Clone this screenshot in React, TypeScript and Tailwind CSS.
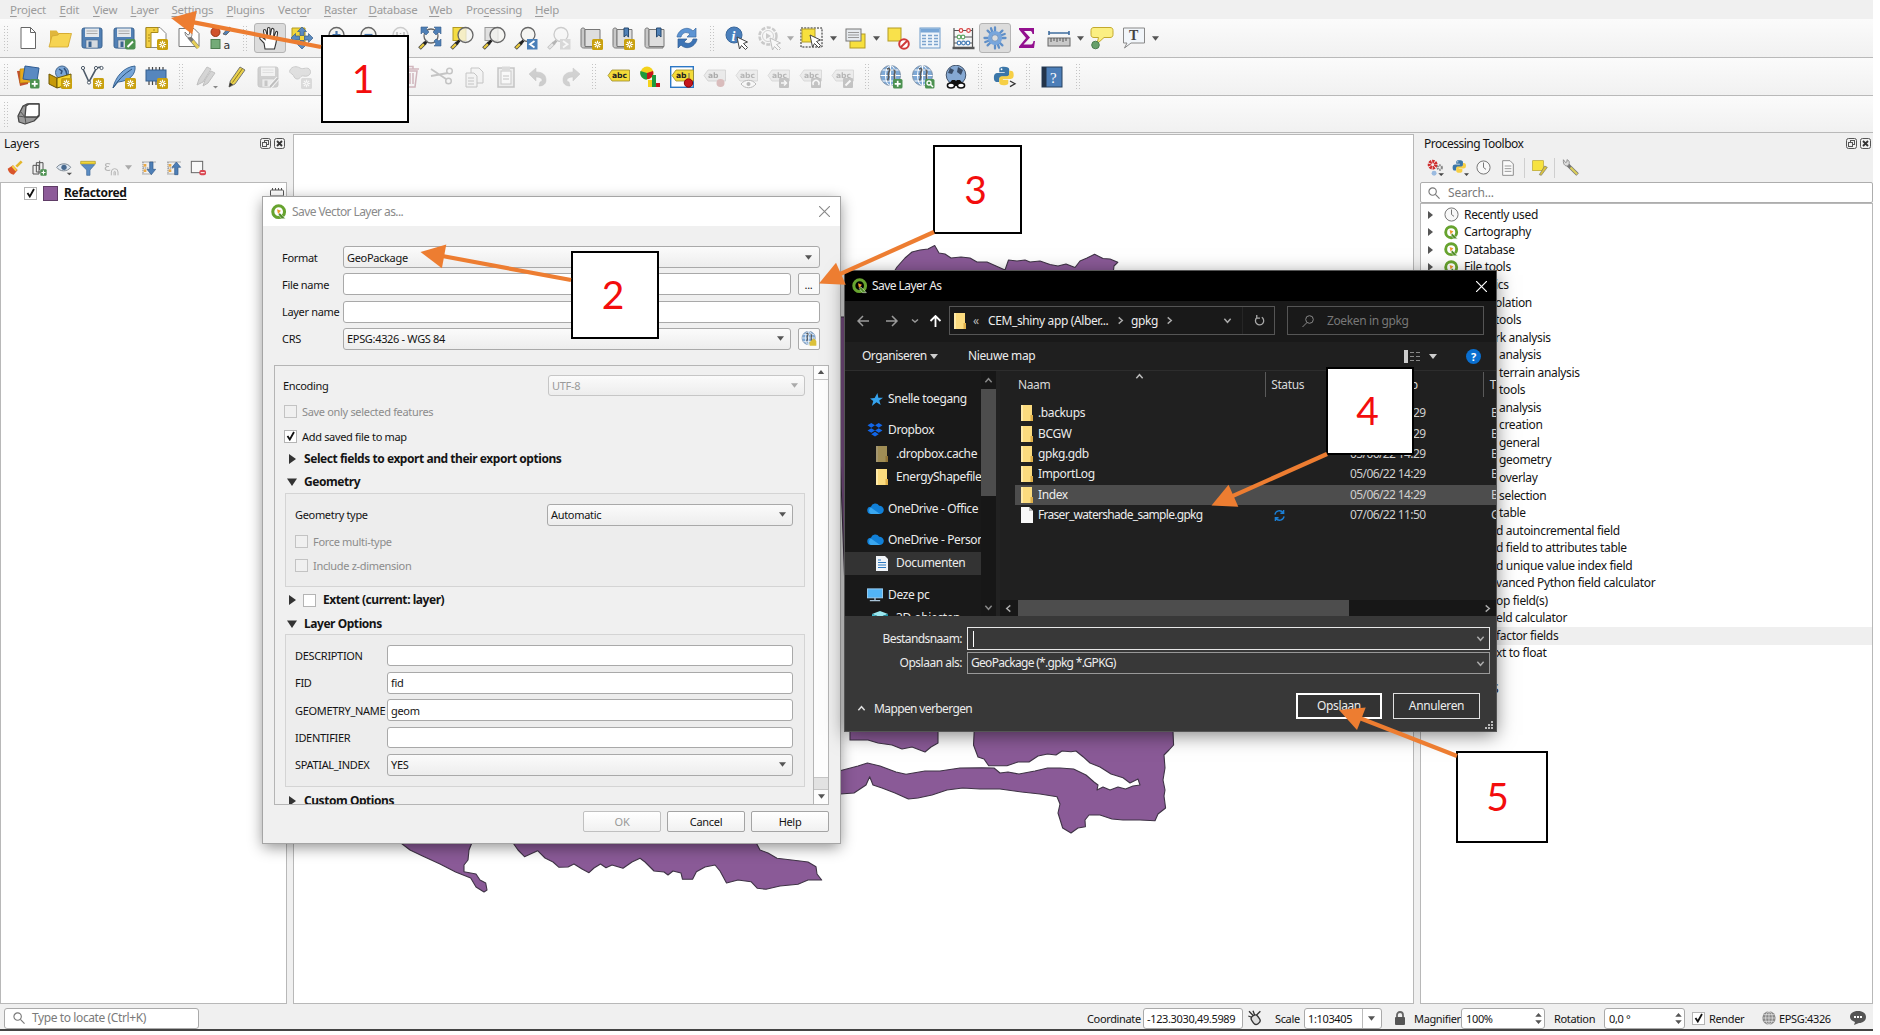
import React from "react";

type IconProps = { children: React.ReactNode; faded?: boolean; size?: string };

function Ic({ children, faded, size = "size-6" }: IconProps) {
  return (
    <svg viewBox="0 0 24 24" fill="none" className={`${size} shrink-0 ${faded ? "opacity-30 grayscale" : ""}`}>
      {children}
    </svg>
  );
}

const Star = ({ x = 13, y = 13 }: { x?: number; y?: number }) => (
  <g transform={`translate(${x} ${y})`}>
    <rect width="11" height="11" rx="1.5" fill="#c9a10f" />
    <path d="M5.5 1.8v7.4M1.8 5.5h7.4M2.9 2.9l5.2 5.2M8.1 2.9L2.9 8.1" stroke="#fff" strokeWidth="1.2" />
    <circle cx="5.5" cy="5.5" r="1" fill="#c9a10f" />
  </g>
);

const Plus = () => (
  <g>
    <rect x="14" y="14" width="9.5" height="9.5" rx="1.5" fill="#4c9150" />
    <path d="M18.7 15.8v6M15.7 18.8h6" stroke="#fff" strokeWidth="1.7" />
  </g>
);

const Lens = ({ cx = 14.5, cy = 9, r = 7.5, stick = "#e8c93c" }: { cx?: number; cy?: number; r?: number; stick?: string }) => (
  <g>
    <path d="M1.5 22.5l6-6" stroke="#444" strokeWidth="3.8" />
    <path d="M2 22l4-4" stroke={stick} strokeWidth="2.3" />
    <path d="M6 18l3.5-3.5" stroke="#222" strokeWidth="2.6" />
    <circle cx={cx} cy={cy} r={r} fill="#f4f4f0" fillOpacity=".75" stroke="#666" strokeWidth="1.3" />
  </g>
);

const Disk = () => (
  <g>
    <rect x="2" y="2" width="20" height="20" rx="2" fill="#5180b5" stroke="#3c6491" />
    <rect x="5" y="2.5" width="14" height="8.5" fill="#e4e8ec" />
    <path d="M6.5 5h11M6.5 7.5h11" stroke="#aaa" />
    <rect x="6" y="14" width="12" height="8" fill="#d5dae0" stroke="#46698f" strokeWidth=".6" />
    <rect x="8.5" y="15.5" width="3" height="5.5" fill="#3c6491" />
  </g>
);

const Pencil = () => (
  <g>
    <path d="M5 22l1.3-6L16 2l5 3-10 14z" fill="#e9d04b" stroke="#777" />
    <path d="M8.5 17.5L18.5 3.5" stroke="#8a7820" strokeWidth="1" />
    <path d="M5 22l1-4.5 3 2z" fill="#333" />
  </g>
);

const Tag = ({ text = "abc" }: { text?: string }) => (
  <g>
    <path d="M2 10.5L6 5h17.5v11H6z" fill="#f3db39" stroke="#9c8a28" strokeWidth=".8" />
    <text x="6" y="13" fontSize="7.6" fontWeight="bold" fill="#222" fontFamily="DejaVu Sans">{text}</text>
  </g>
);

const Globe = () => (
  <g>
    <circle cx="11.5" cy="10.5" r="10" fill="#7fa9d6" stroke="#7b90a8" />
    <path d="M1.5 10.5h20M11.5.5v20M3.5 5h16M3.5 16h16" stroke="#fff" strokeWidth="1.1" />
    <ellipse cx="11.5" cy="10.5" rx="5" ry="10" stroke="#fff" strokeWidth="1" />
    <path d="M8 4c2-1 3-.5 2.500 1.500s-2 3-1 5-.5 4-1 5M14.500 5c2 0 1.500 3 1 4s.5 4 0 6" stroke="#5a5a5a" strokeWidth="1.700" />
  </g>
);

const Cursor = ({ x = 12, y = 10 }: { x?: number; y?: number }) => (
  <path transform={`translate(${x} ${y})`} d="M0 0l10.5 5-4 1.5 4 4-2 2-4-4L2.5 12z" fill="#fff" stroke="#444" strokeWidth="1" />
);

const Book = () => (
  <g>
    <path d="M2 3.5c0-2 4-2 4 0v16H20v2.5H4.5C3 22 2 21 2 19.500z" fill="#c8c8c8" stroke="#777" />
    <path d="M6 3.500H21v17H6z" fill="#dedede" stroke="#777" />
  </g>
);

const Arrow45 = "M0 -11l4.500 4.500h-2.500v4h-4v-4h-2.500z";

const Python = () => (
  <g>
    <path d="M12 2c-4 0-5 1-5 3v3h6v1H5c-2 0-4 1-4 5s1.500 5 3.500 5H7v-3c0-2 1-3 3-3h5c2 0 3-1 3-3V5c0-2-2-3-6-3z" fill="#3b76a8" />
    <path d="M12 22.500c4 0 5-1 5-3v-3h-6v-1h8c2 0 4-1 4-4.500s-1.500-4.500-3.500-4.500H18v3c0 2-1 3-3 3h-5c-2 0-3 1-3 3v4c0 2 1.500 3 5 3z" fill="#f6cf45" />
    <circle cx="9.500" cy="4.700" r="1" fill="#fff" />
  </g>
);

function QLogo({ size = "size-4" }: { size?: string }) {
  return (
    <Ic size={size}>
      <circle cx="11.500" cy="11.500" r="8.800" stroke="#67a32f" strokeWidth="4.600" />
      <path d="M13 13l8.500 9h-5.500l-5-6z" fill="#4f8c25" stroke="#f0f0f0" strokeWidth=".8" />
      <path d="M9 8l6 2-4.500 5z" fill="#ee9a2c" />
    </Ic>
  );
}

function Grip({ w = "w-[17px]" }: { w?: string }) {
  return (
    <div className={`${w} flex shrink-0 justify-center`}>
      <div className="h-[27px] w-[6px] bg-[radial-gradient(#c4c4c4_0.9px,transparent_1px)] bg-[size:3px_3px]" />
    </div>
  );
}

function Caret({ w = "w-3", dim }: { w?: string; dim?: boolean }) {
  return (
    <div className={`${w} flex shrink-0 justify-center`}>
      <svg viewBox="0 0 8 5" className="h-[5px] w-[7px]"><path d="M0 0h8L4 5z" fill={dim ? "#aaa" : "#555"} /></svg>
    </div>
  );
}

function Cell({ children, active }: { children: React.ReactNode; active?: boolean }) {
  return (
    <div className={`flex h-[30px] w-[32.1px] shrink-0 items-center justify-center ${active ? "rounded-[3px] border border-[#b4b4b4] bg-[#dcdcdc]" : ""}`}>
      {children}
    </div>
  );
}

const menus: [string, string, string, string][] = [
  ["", "P", "roject", "w-[49.500px]"], ["", "E", "dit", "w-[33.500px]"], ["", "V", "iew", "w-[37.500px]"], ["", "L", "ayer", "w-[41px]"],
  ["", "S", "ettings", "w-[55px]"], ["", "P", "lugins", "w-[51.500px]"], ["Vect", "o", "r", "w-[46px]"], ["", "R", "aster", "w-[44.500px]"],
  ["", "D", "atabase", "w-[60.500px]"], ["", "W", "eb", "w-[37px]"], ["Pro", "c", "essing", "w-[69px]"], ["", "H", "elp", "w-[40px]"],
];

function MenuBar() {
  return (
    <div className="flex h-[19px] items-center bg-[#f0f0f0] pl-[10px] text-[11.500px] tracking-[-0.25px] text-[#9b9b9b]">
      {menus.map(([a, b, c, w], i) => (
        <span key={i} className={`${w} shrink-0 whitespace-nowrap`}>{a}<span className="underline underline-offset-2">{b}</span>{c}</span>
      ))}
    </div>
  );
}

function ToolbarOne() {
  return (
    <div className="flex h-[39px] items-center border-b border-[#b9b9b9] bg-linear-to-b from-[#fbfbfb] to-[#f1f1f1]">
      <Grip w="w-[12px]" />
      <Cell><Ic><path d="M5 1.500h9.500l5 5v16H5z" fill="#fff" stroke="#666" /><path d="M14.500 1.500v5h5" stroke="#666" /></Ic></Cell>
      <Cell><Ic><path d="M2 20V4.500h6.500l2 2.500H21v13z" fill="#e0b63c" /><path d="M1 21L4 10l6-1 1-1.500h12.500L20 21z" fill="#f6d452" stroke="#d1a62f" strokeWidth=".8" /></Ic></Cell>
      <Cell><Ic><Disk /></Ic></Cell>
      <Cell><Ic><Disk /><rect x="13" y="13" width="10.500" height="10.500" rx="2" fill="#4c9150" /><path d="M15.500 21l5.500-5.500" stroke="#fff" strokeWidth="2" /></Ic></Cell>
      <Cell><Ic><path d="M2 1.500h14l6 6v14H2z" fill="#fff" stroke="#888" /><path d="M2 1.500h12v5H7v15H2z" fill="#f2cf43" stroke="#a88a1a" /><path d="M4 9h2M4 12h2M4 15h2M10 3v2" stroke="#a88a1a" /><Star /></Ic></Cell>
      <Cell><Ic><path d="M2 2.500h15l5 5v13H2z" fill="#fff" stroke="#777" /><path d="M12 11l9 10.500" stroke="#777" strokeWidth="4" /><path d="M15.500 15l6 7" stroke="#e6cf58" strokeWidth="2.800" /><path d="M8 6l3 3 1.500-1V5c3 1 3 4 1.500 6.500-3 1-6-1-6-5.500z" fill="#eee" stroke="#666" strokeWidth=".8" /></Ic></Cell>
      <Cell><Ic><circle cx="6.500" cy="6" r="4.500" fill="#d0522a" stroke="#963310" /><rect x="2" y="13.500" width="9" height="9" fill="#74ab78" stroke="#4c7d4f" /><path d="M14 8l6-7 3 2-6 6z" fill="#5180b5" stroke="#555" strokeWidth=".8" /><text x="14.500" y="22.500" fontSize="11" fill="#333" fontFamily="DejaVu Sans">a</text></Ic></Cell>
      <Grip />
      <Cell active><Ic><path d="M7 23l-1-6-4-4c-1-2 1-3 2.500-1.500L7 13.500 5.500 5c0-2 2-2 2.500 0l1.500 6V3c0-2 2.500-2 2.500 0v8l1.500-7.500c.5-2 2.500-1 2.500.5L15.500 12l2-5.500c1-2 2.500-1 2 1L18 17l-1.500 6z" fill="#fff" stroke="#333" strokeWidth="1.100" /></Ic></Cell>
      <Cell><Ic><path d="M2 2h13v14H2z" fill="#f3d73b" stroke="#b39b22" /><g transform="translate(12 12)" fill="#5b8abf" stroke="#365d8a" strokeWidth=".7"><path d={Arrow45} /><path transform="rotate(90)" d={Arrow45} /><path transform="rotate(180)" d={Arrow45} /><path transform="rotate(270)" d={Arrow45} /></g></Ic></Cell>
      <Cell><Ic><Lens /><path d="M14.500 5v8M10.500 9h8" stroke="#4a78ae" strokeWidth="2.200" /></Ic></Cell>
      <Cell><Ic><Lens /><path d="M10.500 9h8" stroke="#4a78ae" strokeWidth="2.200" /></Ic></Cell>
      <Cell><Ic faded><Lens /><path d="M11 6v6M18 6v6M14.500 7v1M14.500 10v1" stroke="#333" strokeWidth="1.500" /></Ic></Cell>
      <Cell><Ic><Lens cx={13} cy={10} r={7} /><g fill="#4f80b6" stroke="#365d8a" strokeWidth=".6"><path d="M3 1h7L8 3l3 3-3 3-3-3-2 2z" /><path d="M23 1h-7l2 2-3 3 3 3 3-3 2 2z" /><path d="M23 20h-7l2-2-2-3 2-2 3 2 2-2z" /></g></Ic></Cell>
      <Cell><Ic><rect x="3" y="1.500" width="13" height="13" fill="#f5dc43" stroke="#b39b22" /><Lens cx={15.500} /></Ic></Cell>
      <Cell><Ic><rect x="3" y="1.500" width="13" height="13" fill="#e0e0e0" stroke="#999" /><Lens cx={15.500} /></Ic></Cell>
      <Cell><Ic><Lens cx={14} cy={8.500} r={7} /><rect x="13" y="13" width="10.500" height="10.500" fill="#4a7fb8" /><path d="M20.500 15l-4.500 3.200 4.500 3.200" stroke="#fff" strokeWidth="1.800" /></Ic></Cell>
      <Cell><Ic faded><Lens cx={14} cy={8.500} r={7} /><rect x="13" y="13" width="10.500" height="10.500" fill="#999" /><path d="M16 15l4.500 3.200L16 21.400" stroke="#fff" strokeWidth="1.800" /></Ic></Cell>
      <Cell><Ic><Book /><Star /></Ic></Cell>
      <Cell><Ic><Book /><path d="M13 2h4.500v9l-2.200-2-2.300 2z" fill="#4f80b6" stroke="#27496f" /><Star /></Ic></Cell>
      <Cell><Ic><Book /><path d="M13.500 2H18v9l-2.200-2-2.300 2z" fill="#4f80b6" stroke="#27496f" /></Ic></Cell>
      <Cell><Ic><path d="M2 11C3 4 12-1 18 5l3-3v9h-9l3-3c-4-3-8-1-9 3z" fill="#5d94d3" stroke="#3a6aa3" strokeWidth=".7" /><path d="M22 13c-1 7-10 12-16 6l-3 3v-9h9l-3 3c4 3 8 1 9-3z" fill="#3d74b5" stroke="#2e5b92" strokeWidth=".7" /></Ic></Cell>
      <Grip w="w-[18px]" />
      <Cell><Ic><circle cx="9" cy="9" r="8" fill="#4a80bd" stroke="#3a689c" /><text x="6.500" y="14.500" fontSize="14" fontStyle="italic" fontWeight="bold" fill="#fff" fontFamily="Liberation Serif">i</text><Cursor x={12} y={11} /></Ic></Cell>
      <Cell><Ic faded><circle cx="11" cy="10" r="8.500" stroke="#666" strokeWidth="2.500" strokeDasharray="4 1.500" /><circle cx="11" cy="10" r="5.500" stroke="#777" /><path d="M9 7l5 3-5 3z" fill="#666" /><Cursor x={13} y={12} /></Ic></Cell>
      <Caret w="w-[11px]" dim />
      <Cell><Ic><rect x="1" y="2" width="21" height="19" stroke="#222" strokeDasharray="2 1.200" /><rect x="2" y="3" width="13" height="13" fill="#f7e03d" stroke="#b5a02a" /><Cursor x={10} y={9} /></Ic></Cell>
      <Caret w="w-[11px]" />
      <Cell><Ic><rect x="7" y="8" width="15" height="14" fill="#f7e03d" stroke="#b39b22" /><rect x="3" y="3" width="15" height="12" fill="#e6eaee" stroke="#777" /><path d="M5 6.500h11M5 9h11M5 11.500h11" stroke="#999" /></Ic></Cell>
      <Caret w="w-[11px]" />
      <Cell><Ic><rect x="2" y="2" width="13" height="13" fill="#f9e14b" stroke="#b39b22" /><circle cx="18" cy="18" r="4.800" fill="#fff" stroke="#d03a3a" strokeWidth="2" /><path d="M15 21l6-6" stroke="#d03a3a" strokeWidth="2" /></Ic></Cell>
      <Cell><Ic><rect x="2" y="2" width="20" height="20" fill="#eef4fa" stroke="#6e9bc9" /><rect x="2.500" y="2.500" width="19" height="4" fill="#78a6d6" /><path d="M4 9.500h4M10 9.500h4M16 9.500h4M4 12.500h4M10 12.500h4M16 12.500h4M4 15.500h4M10 15.500h4M16 15.500h4M4 18.500h4M10 18.500h4M16 18.500h4" stroke="#7ba3cd" strokeWidth="1.500" /></Ic></Cell>
      <Cell><Ic><path d="M3 2v20M21.500 2v20M3 4.500h18M3 11h18M3 17h18" stroke="#555" strokeWidth="1.200" /><path d="M1.500 22h22" stroke="#555" strokeWidth="2.500" /><g fill="#fff" strokeWidth="1.200"><g stroke="#d84343"><circle cx="10" cy="4.500" r="1.800" /><circle cx="17.500" cy="4.500" r="1.800" /></g><g stroke="#61a866"><circle cx="8" cy="11" r="1.800" /><circle cx="12" cy="11" r="1.800" /></g><g stroke="#4b81ba"><circle cx="8" cy="17" r="1.800" /><circle cx="12.500" cy="17" r="1.800" /><circle cx="17" cy="17" r="1.800" /></g></g></Ic></Cell>
      <Cell active><Ic><path d="M12 6V1.500M12 18v4.500M6 12H1.500M18 12h4.500M7.800 7.800L4.600 4.600M16.200 16.200l3.200 3.200M7.800 16.200l-3.200 3.200M16.200 7.800l3.200-3.200M9.500 6.500L8 2.300M14.500 17.500l1.500 4.200M6.500 14.500L2.300 16M17.500 9.500L21.700 8" stroke="#5f8fc8" strokeWidth="2.300" strokeLinecap="round" /><circle cx="12" cy="12" r="5.300" fill="#dcdcdc" stroke="#78a6dc" strokeWidth="3.600" /><circle cx="12" cy="12" r="3.300" stroke="#5584bb" strokeWidth=".8" /></Ic></Cell>
      <Cell><Ic><path d="M4 2h15v6h-1.500c-.5-2.500-1-3-3-3H9l6 6.500-6.500 7H15c2 0 3-.5 3.500-3.500H20L19 22H4v-1.500L11 12 4 3.500z" fill="#93108f" /></Ic></Cell>
      <Cell><Ic><path d="M2 7h20M2 5v4M22 5v4" stroke="#3f6d9f" strokeWidth="1.600" /><rect x="1" y="12" width="22" height="8" fill="#c9c9c9" stroke="#666" /><path d="M4 12v4M7 12v3M10 12v4M13 12v3M16 12v4M19 12v3" stroke="#555" /></Ic></Cell>
      <Caret w="w-[11px]" />
      <Cell><Ic><path d="M4 1.500h16c2 0 3 1 3 3v4c0 2-1 3-3 3h-6L7 18l1.500-6.500H4c-2 0-3-1-3-3v-4c0-2 1-3 3-3z" fill="#fbef82" stroke="#c3a92c" /><circle cx="5.500" cy="19" r="3.800" fill="#67a06a" stroke="#4c7d4f" /></Ic></Cell>
      <Cell><Ic><path d="M1.500 2h21v15H9l-6.500 5L5 17H1.500z" fill="#f2f6fa" stroke="#888" /><text x="7" y="14" fontSize="14" fontWeight="bold" fill="#444" fontFamily="Liberation Serif">T</text></Ic></Cell>
      <Caret w="w-[11px]" />
    </div>
  );
}

function ToolbarTwo() {
  return (
    <div className="flex h-[38px] items-center border-b border-[#b9b9b9] bg-linear-to-b from-[#fbfbfb] to-[#f1f1f1]">
      <Grip w="w-[12px]" />
      <Cell><Ic><path d="M1 6l12-1-1 14-8 2z" fill="#c2502c" /><path d="M4 4l13-1-1 14-12 1z" fill="#e8a91c" stroke="#b0800c" strokeWidth=".6" /><path d="M9 1l14 2-2 13-14-2z" fill="#5a8ac2" stroke="#2f5c92" /><Plus /></Ic></Cell>
      <Cell><Ic><circle cx="14" cy="7.500" r="6.500" fill="#7ba6d6" stroke="#46688f" /><path d="M11 4l3 2-1 3M16 3l2 3 1 4" stroke="#31517a" strokeWidth="1.500" /><path d="M1 9l8 4v10l-8-4z" fill="#c79a08" stroke="#6d5605" /><path d="M9 13l14-4v10L9 23z" fill="#f7d52c" stroke="#6d5605" /><Star /></Ic></Cell>
      <Cell><Ic><path d="M3 4l6 13L16 4c2-2 4-2 5-2" stroke="#4d5a68" strokeWidth="1.600" /><g fill="#fff" stroke="#4d5a68"><circle cx="3" cy="3" r="1.600" /><circle cx="9" cy="17.500" r="1.600" /><circle cx="16" cy="3" r="1.600" /><circle cx="21.500" cy="3" r="1.600" /></g><Star /></Ic></Cell>
      <Cell><Ic><path d="M1 23C3 13 11 2 23 1c1 8-5 15-17 16z" fill="#76a5d8" stroke="#3c6796" /><path d="M1 23C6 15 12 9 20 4" stroke="#2e567f" /><Star /></Ic></Cell>
      <Cell><Ic><path d="M5 2v18M8.500 2v18M12 2v18M15.500 2v18M19 2v18" stroke="#444" strokeWidth="1.200" /><rect x="2" y="5" width="20" height="11" fill="#5686bd" stroke="#355f8e" /><Star /></Ic></Cell>
      <Grip />
      <Cell><Ic><g opacity=".3"><path d="M3 20l2-6L13 2l4 2-8 13zM9 21l2-6 6-9 4 2-7 10z" fill="#888" stroke="#444" /></g><path d="M19 21h5l-2.500 2.500z" fill="#888" /></Ic></Cell>
      <div className="-ml-[2px] flex"><Cell><Ic><Pencil /></Ic></Cell></div>
      <Cell><Ic faded><Disk /><path d="M14 22l8-9" stroke="#fff" strokeWidth="4" /><path d="M14 22l8-9" stroke="#444" strokeWidth="2" /></Ic></Cell>
      <Cell><Ic faded><path d="M2 5c2-4 7-4 10-2s8-2 10 2-2 7-6 6-3 3-7 3c-3 0-3-4-5-5S1 7 2 5z" fill="#aaa" stroke="#666" /><Star /></Ic></Cell>
      <Cell><Ic faded><Pencil /></Ic></Cell>
      <Caret w="w-[14px]" dim />
      <Cell><Ic faded><Pencil /></Ic></Cell>
      <Cell><Ic><g opacity=".4"><path d="M5 6l2 16h10l2-16zM3 4h18M9 4V1.500h6V4M9 8v11M12 8v11M15 8v11" stroke="#956" strokeWidth="1.500" /></g></Ic></Cell>
      <Cell><Ic faded><path d="M1 4l15 10M1 11l17-3" stroke="#555" strokeWidth="1.800" /><circle cx="19.500" cy="6" r="2.800" stroke="#555" strokeWidth="1.500" /><circle cx="18.500" cy="16" r="2.800" stroke="#555" strokeWidth="1.500" /></Ic></Cell>
      <Cell><Ic faded><path d="M9 3h8l4 4v11H9z" fill="#eee" stroke="#555" /><path d="M4 8h8l3 3v11H4z" fill="#eee" stroke="#555" /><path d="M6 13h6M6 16h6M6 19h6" stroke="#555" /></Ic></Cell>
      <Cell><Ic faded><rect x="4" y="3" width="16" height="19" fill="#ddd" stroke="#555" strokeWidth="1.500" /><rect x="7" y="6" width="10" height="13" fill="#fff" stroke="#666" /><rect x="8" y="1.500" width="8" height="4" fill="#999" /><path d="M9 11h6M9 14h6" stroke="#555" /></Ic></Cell>
      <Cell><Ic faded><path d="M3 9l7-6v4c7 0 10 3 10 8 0 4-3 6-7 6l1-4c4-1 2-5-4-5v4z" fill="#a66" stroke="#844" strokeWidth=".5" /></Ic></Cell>
      <Cell><Ic faded><path d="M21 9l-7-6v4C7 7 4 10 4 15c0 4 3 6 7 6l-1-4c-4-1-2-5 4-5v4z" fill="#686" stroke="#464" strokeWidth=".5" /></Ic></Cell>
      <Grip w="w-[15px]" />
      <Cell><Ic><Tag /></Ic></Cell>
      <Cell><Ic><circle cx="9" cy="8" r="6.500" fill="#f4d21b" /><path d="M9 8L2.500 6A6.500 6.500 0 009 14.500z" fill="#1d9a3c" /><path d="M9 8l6-2a6 6 0 01-6 8z" fill="#c5161c" /><rect x="10" y="15" width="4" height="7" fill="#f4d21b" /><rect x="14" y="10" width="4" height="12" fill="#1d9a3c" /><rect x="18" y="18" width="4" height="4" fill="#c5161c" /></Ic></Cell>
      <Cell><Ic><rect x=".7" y="1.700" width="22.600" height="20.600" fill="#fff" stroke="#2b77c5" strokeWidth="1.400" /><Tag text="ab" /><path d="M19 13V8" stroke="#666" /><circle cx="18.500" cy="18" r="4.200" fill="#c5161c" stroke="#800" /></Ic></Cell>
      <Cell><Ic><g opacity=".35"><g className="grayscale"><Tag text="ab" /></g><circle cx="18.500" cy="18" r="4" fill="#a55" /></g></Ic></Cell>
      <Cell><Ic faded><Tag /><path d="M7 19c4-5 11-5 15 0-4 5-11 5-15 0z" fill="#fff" stroke="#333" /><circle cx="14.500" cy="19" r="2" fill="#333" /></Ic></Cell>
      <Cell><Ic faded><Tag /><rect x="13" y="13" width="10" height="10" rx="1" fill="#555" /><path d="M15 18h5M18 15.500l2.500 2.500L18 20.500" stroke="#fff" strokeWidth="1.500" /></Ic></Cell>
      <Cell><Ic faded><Tag /><rect x="13" y="13" width="10" height="10" rx="1" fill="#555" /><path d="M15.500 20a3 3 0 115 0" stroke="#fff" strokeWidth="1.500" /></Ic></Cell>
      <Cell><Ic faded><Tag /><rect x="13" y="13" width="10" height="10" rx="1" fill="#555" /><path d="M15.500 20.500l5-5" stroke="#fff" strokeWidth="2" /></Ic></Cell>
      <Grip w="w-[17px]" />
      <Cell><Ic><Globe /><Plus /></Ic></Cell>
      <Cell><Ic><Globe /><rect x="14" y="14" width="9.500" height="9.500" rx="1.500" fill="#4c9150" /><circle cx="18" cy="18" r="2" stroke="#fff" strokeWidth="1.300" /><path d="M19.500 19.500l2.500 2.500" stroke="#fff" strokeWidth="1.500" /></Ic></Cell>
      <Cell><Ic><circle cx="12" cy="10" r="9.800" fill="#86a9d3" stroke="#41536b" /><path d="M6 3l4 2-2 4-4-1M14 2l5 3-2 5-4-3" fill="#3a4c66" /><path d="M3 21l5-6 3 0 1 1 1-1h3l5 6z" fill="#111" /><ellipse cx="7" cy="20.500" rx="3.600" ry="2.500" fill="#fff" stroke="#111" strokeWidth="1.500" /><ellipse cx="17" cy="20.500" rx="3.600" ry="2.500" fill="#fff" stroke="#111" strokeWidth="1.500" /></Ic></Cell>
      <Grip />
      <Cell><Ic><g transform="scale(.9)"><Python /></g><path d="M17 16l5 2.800-5 2.800" stroke="#333" strokeWidth="1.300" /></Ic></Cell>
      <Grip w="w-[15px]" />
      <Cell><Ic><rect x="2" y="2" width="20" height="20" fill="#4c7eb8" stroke="#26405f" /><rect x="2" y="2" width="4.500" height="20" fill="#23344a" /><text x="10" y="17.500" fontSize="15" fill="#fff" fontFamily="Liberation Serif">?</text></Ic></Cell>
      <Grip w="w-[20px]" />
    </div>
  );
}

function DockButtons() {
  return (
    <div className="flex gap-[3px]">
      <svg viewBox="0 0 11 11" className="size-[11px]" fill="none" stroke="#555"><rect x=".5" y=".5" width="10" height="10" rx="2" /><rect x="4.500" y="2.500" width="4" height="4" /><rect x="2.500" y="4.500" width="4" height="4" fill="#f0f0f0" /></svg>
      <svg viewBox="0 0 11 11" className="size-[11px]" fill="none" stroke="#555"><rect x=".5" y=".5" width="10" height="10" rx="2" /><path d="M3 3l5 5M8 3l-5 5" stroke="#333" strokeWidth="1.800" /></svg>
    </div>
  );
}

function LayersPanel() {
  return (
    <div className="flex w-[287px] shrink-0 flex-col">
      <div className="flex h-[19px] items-center justify-between pl-1 pr-[2px] text-[12px] leading-[16px] tracking-[-0.2px]"><span>Layers</span><DockButtons /></div>
      <div className="flex h-[29px] items-center gap-[8.300px] pl-[7px]">
        <Ic size="size-4"><path d="M14 10l8-8" stroke="#e3b62b" strokeWidth="4" /><path d="M1 13l8-5 7 7-6 7c-5-1-8-4-9-9z" fill="#d9552b" /><path d="M8 9l6 7" stroke="#f5d343" strokeWidth="3" /></Ic>
        <Ic size="size-4"><path d="M3 8h9v13H3zM8 4h10v14H8zM13 1v14" stroke="#555" strokeWidth="1.500" /><Plus /></Ic>
        <Ic size="size-4"><path d="M1 11c5-7 17-7 21 0-5 7-16 7-21 0z" fill="#dde6f0" stroke="#7c8894" strokeWidth="1.500" /><circle cx="12" cy="11" r="4" fill="#47698f" /><path d="M16 19h8l-4 4z" fill="#555" /></Ic>
        <Ic size="size-4"><path d="M1 2h22v4H1z" fill="#f1d53a" stroke="#a8941f" /><path d="M2 7h20l-7 8v8h-5v-8z" fill="#5b8dc4" stroke="#3c6797" /></Ic>
        <div className="flex items-center gap-1"><Ic size="size-4" faded><text x="0" y="16" fontSize="22" fill="#333">ε</text><path d="M11 23v-5a5 5 0 0110 0v5M15 23v-5a1 1 0 012 0v5" stroke="#333" strokeWidth="1.500" /></Ic><Caret w="w-[9px]" dim /></div>
        <Ic size="size-4"><path d="M2 3h20M2 21h14M3 3v18M3 12h8" stroke="#888" strokeWidth="1.500" strokeDasharray="2 1" /><rect x="4" y="6" width="4" height="4" fill="#ecaa46" /><rect x="4" y="14" width="4" height="4" fill="#ecaa46" /><path d="M13 3h5v11h4l-6.500 8L9 14h4z" fill="#4e7fb7" stroke="#31598a" /></Ic>
        <Ic size="size-4"><path d="M2 3h20M2 21h14M3 3v18M3 12h8" stroke="#888" strokeWidth="1.500" strokeDasharray="2 1" /><rect x="4" y="6" width="4" height="4" fill="#ecaa46" /><rect x="4" y="14" width="4" height="4" fill="#ecaa46" /><path d="M13 22h5V11h4l-6.500-8L9 11h4z" fill="#4e7fb7" stroke="#31598a" /></Ic>
        <Ic size="size-4"><rect x="2" y="2" width="17" height="17" fill="#f7f7f7" stroke="#666" strokeWidth="1.500" /><rect x="14" y="15" width="10" height="8" rx="3" fill="#d94550" /><path d="M16 19h6" stroke="#fff" strokeWidth="1.500" /></Ic>
      </div>
      <div className="min-h-0 flex-1 border border-[#b8b8b8] bg-white">
        <div className="flex h-[20px] items-center pl-[23px] pr-[2px]">
          <CheckBox checked />
          <div className="ml-[6px] size-[15px] border border-[#5f3c66] bg-[#8d5b99]" />
          <span className="ml-[6px] text-[12px] font-bold tracking-[-0.3px] underline underline-offset-2">Refactored</span>
          <svg viewBox="0 0 14 12" className="ml-auto h-3 w-3.500" fill="none" stroke="#555"><path d="M2.500 1v10M5.500 1v10M8.500 1v10M11.500 1v10" /><rect x=".5" y="3" width="13" height="6" rx="1" fill="#fff" /></svg>
        </div>
      </div>
    </div>
  );
}

function CheckBox({ checked, off }: { checked?: boolean; off?: boolean }) {
  return (
    <div className={`flex size-[13px] shrink-0 items-center justify-center border ${off ? "border-[#c3c3c3] bg-[#f0f0f0]" : "border-[#b4b4b4] bg-white"}`}>
      {checked && <svg viewBox="0 0 10 10" className="size-[10px]"><path d="M1.500 5l2.300 3.500L8 1" fill="none" stroke="#111" strokeWidth="1.800" /></svg>}
    </div>
  );
}

function MapCanvas() {
  return (
    <div className="ml-[6px] w-[1121px] shrink-0 border border-[#b8b8b8] bg-white">
      <svg viewBox="294 135 1119 867" className="h-[867px] w-[1119px]" fill="#8a5a97" stroke="#3f3346" strokeWidth="1.100" strokeLinejoin="round">
        <path d="M892 275L897 267 905 258 912 252 920 250 928 249 934.700 245.500 939 253 945 254 951 258 961 257 970 258 977 262 987 262 996 266 1005 270 1008.500 260 1017 261 1025 260 1030 262 1040 261 1050 264.500 1058 266 1066 264 1075 267.500 1080 261 1087 258 1094.600 254.300 1103 258.500 1110 259 1117.800 262.300 1114 266 1113 275z" />
        <path d="M835 317H850V740L868 740 878 743 892 745 902 749 912 747 925 752 931 747 938 743V725H850z" />
        <path d="M974.500 725L973.500 745 978 757 984 759 988.700 765.700 1007 765.700 1018 762 1029 762 1038 756 1047.600 754 1056 755 1062 751 1071 751.700 1076 751 1083 756.700 1090 763 1100 767 1111 774 1123 777.700 1130 783 1138 779 1140 785 1133 786 1125.500 789 1118 787 1110 790 1103 787 1097 790 1098 785 1094 782 1086 775 1073.600 769 1060 768 1047.600 768 1035 771 1019 774 1008 772 1000 773 994 768 981.600 767.700 960 768 940 771 925 771 906 774.300 896 772 880 766 867.400 763 858 766 840 770.700V794L854 793 866 785 869.700 776.700 873 785 882 788 895 793 908.400 799 918 798 932 795 947 790 962.700 788 980 789 1000 789 1021.700 792 1040 794 1057 796.700 1060 804 1058 813 1062.700 828 1071 833 1078 828 1085.400 826.700 1085 820 1089 815 1100 815 1112 819 1123 820 1140 820 1155 820.700 1158 814 1165.600 808 1164 796 1165 790 1163 780 1165 768 1164 755 1169 750 1173.600 745 1172.700 725z" />
        <path d="M397 840L410 850 422 855.700 440 864 455.600 872 470.700 878 476 887 484 892 487 890 485.700 883 480 880 476 874 464 871.700 464 865 468 860 469 850 473 840z" />
        <path d="M511 840L518 850 524.500 856.700 537.600 850.700 545 858 553 862 559 867.300 568 867 574 864 582 869 589 872.700 594 868 600.500 864 606 867.700 612 865 623 868.300 632 862 640 858.300 645 862 654 871 664 872 668 875 673 871 681 873 682.500 879.300H692.600L696.400 871.700 705 867 715 865 720 871 726.500 883 738 880 751 881.700 757.400 888.300 766 889.300 780 886 798 884.300 808 880 821.700 880 817 874 816 866.700 808 862 798 860.700 777 858.300 768 853 760 850 754.700 840z" />
      </svg>
    </div>
  );
}

const tree: [string, string][] = [
  ["Recently used", ""], ["Cartography", ""], ["Database", ""], ["File tools", ""],
  ["Graph", "ics"], ["Interp", "olation"], ["Layer ", "tools"], ["Netwo", "rk analysis"], ["Raster ", "analysis"], ["Raster ", "terrain analysis"],
  ["Raster ", "tools"], ["Vector ", "analysis"], ["Vector ", "creation"], ["Vector ", "general"], ["Vector ", "geometry"], ["Vector ", "overlay"],
  ["Vector ", "selection"], ["Vector ", "table"], ["Ad", "d autoincremental field"], ["Ad", "d field to attributes table"], ["Ad", "d unique value index field"],
  ["Ad", "vanced Python field calculator"], ["Dr", "op field(s)"], ["Fi", "eld calculator"], ["Re", "factor fields"], ["Te", "xt to float"], ["", ""], ["GRAS", "S"],
];

function Clock({ size = "size-4" }: { size?: string }) {
  return <Ic size={size}><circle cx="12" cy="12" r="10.500" fill="#f8f8f8" stroke="#777" strokeWidth="1.600" /><path d="M12 4v8l4 3" stroke="#777" strokeWidth="1.600" /></Ic>;
}

function Magnifier() {
  return <svg viewBox="0 0 13 13" className="size-3 shrink-0" fill="none" stroke="#777" strokeWidth="1.200"><circle cx="5" cy="5" r="4" /><path d="M8 8l4.500 4.500" /></svg>;
}

function Toolbox() {
  return (
    <div className="ml-[6px] flex w-[453px] shrink-0 flex-col">
      <div className="flex h-[19px] items-center justify-between pl-[4px] pr-[2px] text-[12px] leading-[16px] tracking-[-0.5px]"><span>Processing Toolbox</span><DockButtons /></div>
      <div className="flex h-[29px] items-center pl-[7px]">
        <Ic size="size-[17px]"><circle cx="8" cy="8" r="4.500" stroke="#cf2d2d" strokeWidth="5" strokeDasharray="3 1" /><circle cx="18" cy="12" r="3" stroke="#888" strokeWidth="3" strokeDasharray="2 1" /><circle cx="10" cy="20" r="3.500" fill="#9bbbe0" /><path d="M16 20h8l-4 4z" fill="#444" /></Ic>
        <div className="ml-[8px]"><Ic size="size-[17px]"><g transform="scale(.86)"><Python /></g><path d="M17 20h7l-3.500 4z" fill="#444" /></Ic></div>
        <div className="ml-[7px]"><Clock size="size-[15px]" /></div>
        <div className="ml-[9px]"><Ic size="size-4"><path d="M4 1h11l5 5v17H4z" fill="#fafafa" stroke="#888" strokeWidth="1.400" /><path d="M7 9h10M7 13h10M7 17h10" stroke="#999" strokeWidth="1.500" /></Ic></div>
        <div className="ml-[8px] h-5 w-px bg-[#cfcfcf]" />
        <div className="ml-[7px]"><Ic size="size-4"><rect x="1" y="1" width="16" height="15" fill="#f7e23f" stroke="#b5a02a" /><path d="M11 22l8-13 4 2-9 12z" fill="#dcc33d" stroke="#776" /></Ic></div>
        <div className="ml-[6px] h-5 w-px bg-[#cfcfcf]" />
        <div className="ml-[7px]"><Ic size="size-[17px]"><path d="M8 8l14 14" stroke="#777" strokeWidth="5" /><path d="M12 12l9.500 9.500" stroke="#dccf5a" strokeWidth="3" /><path d="M2 1l3 4 2-1V1c4 1 4 5 2 8-3 2-8 0-7-8z" fill="#ddd" stroke="#777" /></Ic></div>
      </div>
      <div className="flex h-[21px] shrink-0 items-center gap-[8px] rounded-[2px] border border-[#adadad] bg-white pl-[7px] text-[12px] tracking-[-0.2px] text-[#7a7a7a]"><Magnifier />Search...</div>
      <div className="min-h-0 flex-1 overflow-hidden border border-[#b8b8b8] bg-white pt-[2px] text-[12px] tracking-[-0.32px]">
        {tree.map(([a, b], i) => (
          <div key={i} className={`flex h-[17.550px] items-center whitespace-pre ${i === 24 ? "bg-[#efefef]" : ""}`}>
            {b === "" && a !== "" ? (
              <>
                <svg viewBox="0 0 5 8" className="ml-[7px] h-2 w-[5px]"><path d="M0 0l5 4-5 4z" fill="#555" /></svg>
                <div className="ml-[11px] flex w-[20px] items-center">{i === 0 ? <Clock size="size-[15px]" /> : <QLogo size="size-[15px]" />}</div>
                <span>{a}</span>
              </>
            ) : (
              <>
                <span className={`shrink-0 text-right ${i > 26 ? "w-[71px]" : i > 17 ? "w-[75px]" : i > 7 ? "w-[78px]" : "w-[74px]"}`}>{a}</span>
                <span>{b}</span>
              </>
            )}
          </div>
        ))}
      </div>
    </div>
  );
}

function Field({ text, w = "flex-1", h = "h-[22px]", combo, off }: { text?: string; w?: string; h?: string; combo?: boolean; off?: boolean }) {
  return (
    <div className={`${w} ${h} flex items-center rounded-[3px] border px-[3px] ${off ? "border-[#c6c6c6] text-[#9a9a9a]" : "border-[#a9a9a9]"} ${combo ? "bg-linear-to-b from-[#fbfbfb] to-[#ededed]" : "bg-white"}`}>
      <span className="whitespace-nowrap">{text}</span>
      {combo && <div className="ml-auto mr-[3px]"><Caret dim={off} w="w-2" /></div>}
    </div>
  );
}

function Push({ children, off }: { children: React.ReactNode; off?: boolean }) {
  return <div className={`flex h-[20.500px] w-[78px] items-center justify-center rounded-[2px] border bg-linear-to-b from-white to-[#f1f1f1] ${off ? "border-[#c0c0c0] text-[#999]" : "border-[#a4a4a4]"}`}>{children}</div>;
}

function Section({ title, open, box, h }: { title: string; open?: boolean; box?: boolean; h: string }) {
  return (
    <div className={`flex ${h} items-center pl-[12px] text-[12px] font-bold tracking-[-0.45px]`}>
      <svg viewBox="0 0 10 10" className="size-[10px]"><path d={open ? "M0 1.500h10L5 9z" : "M2 0l7 5-7 5z"} fill="#333" /></svg>
      {box && <div className="ml-[6px]"><CheckBox /></div>}
      <span className="ml-[7px] whitespace-nowrap">{title}</span>
    </div>
  );
}

const options: [string, string][] = [["DESCRIPTION", ""], ["FID", "fid"], ["GEOMETRY_NAME", "geom"], ["IDENTIFIER", ""], ["SPATIAL_INDEX", "YES"]];

function VectorDialog() {
  return (
    <div className="absolute left-[263px] top-[197px] flex h-[646px] w-[577px] flex-col bg-[#f0f0f0] text-[11px] tracking-[-0.32px] shadow-[0_4px_14px_rgba(0,0,0,0.45)] ring-1 ring-[#a5a5a5]">
      <div className="flex h-[29px] items-center bg-white pl-[8px] pr-[10px]">
        <QLogo />
        <span className="ml-[5px] text-[12px] tracking-[-0.58px] text-[#8a8a8a]">Save Vector Layer as...</span>
        <svg viewBox="0 0 10 10" className="ml-auto size-[11px]"><path d="M0 0l10 10M10 0L0 10" stroke="#888" /></svg>
      </div>
      <div className="flex flex-col gap-[5.300px] pl-[19px] pr-[20.500px] pt-[20px]">
        <div className="flex items-center"><span className="w-[61px]">Format</span><Field text="GeoPackage" combo /></div>
        <div className="flex items-center"><span className="w-[61px]">File name</span><Field /><div className="ml-[6.500px] flex h-[22px] w-[22px] items-center justify-center rounded-[2px] border border-[#a9a9a9] bg-[#fafafa]">...</div></div>
        <div className="flex items-center"><span className="w-[61px] whitespace-nowrap">Layer name</span><Field /></div>
        <div className="flex items-center"><span className="w-[61px]">CRS</span><Field text="EPSG:4326 - WGS 84" combo /><div className="ml-[6.500px] flex h-[22px] w-[22px] items-center justify-center rounded-[2px] border border-[#a9a9a9] bg-[#fafafa]"><Ic size="size-4"><Globe /><path d="M13 22v-5l6-6 4 4v7z" fill="#dcc13a" /></Ic></div></div>
      </div>
      <div className="ml-[11px] mt-[15px] flex h-[440px] w-[555px] shrink-0 border border-[#b5b5b5]">
        <div className="h-full min-w-0 flex-1 overflow-hidden pr-[8px]">
          <div className="mt-[9px] flex items-center pl-[8px]"><span>Encoding</span><div className="ml-auto flex"><Field text="UTF-8" w="w-[257px]" h="h-[21px]" combo off /></div></div>
          <div className="mt-[3.500px] flex h-[24.500px] items-center gap-[5px] pl-[9px] text-[#8c8c8c]"><CheckBox off />Save only selected features</div>
          <div className="flex h-[24.500px] items-center gap-[5px] pl-[9px]"><CheckBox checked />Add saved file to map</div>
          <Section title="Select fields to export and their export options" h="h-[22px]" />
          <Section title="Geometry" open h="h-[22.500px] pt-[1.500px]" />
          <div className="ml-[10px] h-[94px] border border-[#d4d4d4] bg-[#ededed] pl-[9px] pr-[11px] pt-[10px]">
            <div className="flex items-center"><span>Geometry type</span><div className="ml-auto flex"><Field text="Automatic" w="w-[246px]" combo /></div></div>
            <div className="mt-[3.500px] flex h-6 items-center gap-[5px] text-[#8c8c8c]"><CheckBox off />Force multi-type</div>
            <div className="flex h-6 items-center gap-[5px] text-[#8c8c8c]"><CheckBox off />Include z-dimension</div>
          </div>
          <Section title="Extent (current: layer)" box h="h-[25px] pt-[2px]" />
          <Section title="Layer Options" open h="h-[22px] pt-[2px]" />
          <div className="ml-[10px] flex h-[153px] flex-col gap-[5.800px] border border-[#d4d4d4] bg-[#ededed] pl-[9px] pr-[11px] pt-[10px]">
            {options.map(([k, v]) => <div key={k} className="flex items-center"><span className="w-[92px] whitespace-nowrap">{k}</span><Field text={v} h="h-[21.500px]" combo={v === "YES"} /></div>)}
          </div>
          <Section title="Custom Options" h="h-[28px] pt-px" />
        </div>
        <div className="flex w-[15px] flex-col border-l border-[#b5b5b5] bg-[#fdfdfd]">
          <div className="flex h-[14px] items-center justify-center border-b border-[#c5c5c5]"><svg viewBox="0 0 8 5" className="h-1 w-2"><path d="M0 5h8L4 0z" fill="#555" /></svg></div>
          <div className="flex-1" />
          <div className="h-[13px] border-y border-[#c5c5c5] bg-[#e2e2e2]" />
          <div className="flex h-[14px] items-center justify-center"><Caret /></div>
        </div>
      </div>
      <div className="mt-[6.500px] flex justify-end gap-[6px] pr-[11px]"><Push off>OK</Push><Push>Cancel</Push><Push>Help</Push></div>
    </div>
  );
}

function Folder({ dim }: { dim?: boolean }) {
  return <svg viewBox="0 0 12 16" className={`h-4 w-3 shrink-0 ${dim ? "opacity-60" : ""}`}><path d="M0 0h11v10l1 1v5H0z" fill="#fbdb7e" /><path d="M9.500 10h2.500v6H9.500z" fill="#e0b04a" /><path d="M0 0h2v16H0z" fill="#ffeaa8" /></svg>;
}

function Chev({ d, color = "#aaa" }: { d: "down" | "up" | "left" | "right"; color?: string }) {
  const r = { down: "", up: "rotate-180", left: "rotate-90", right: "-rotate-90" }[d];
  return <svg viewBox="0 0 10 10" className={`size-[9px] shrink-0 ${r}`} fill="none" stroke={color} strokeWidth="1.600"><path d="M1.500 3L5 7l3.500-4" /></svg>;
}

const Cloud = () => <svg viewBox="0 0 18 12" className="h-[11px] w-[17px]"><path d="M4 12a4 4 0 010-8 5 5 0 019-1 4 4 0 011 9z" fill="#1180d8" /><path d="M4 12a4 4 0 010-7l10 7z" fill="#3aa7f0" /></svg>;

const files: [string, string, string][] = [
  [".backups", "05/06/22 14:29", "B"], ["BCGW", "05/06/22 14:29", "B"], ["gpkg.gdb", "05/06/22 14:29", "B"],
  ["ImportLog", "05/06/22 14:29", "B"], ["Index", "05/06/22 14:29", "B"], ["Fraser_watershade_sample.gpkg", "07/06/22 11:50", "G"],
];

function Side({ icon, label, inset, on, h }: { icon: React.ReactNode; label: string; inset?: boolean; on?: boolean; h: string }) {
  return (
    <div className={`flex ${h} shrink-0 items-center overflow-hidden whitespace-nowrap ${on ? "bg-[#333]" : ""} ${inset ? "pl-[31px]" : "pl-[22px]"}`}>
      <div className={`flex shrink-0 ${inset ? "w-5" : "w-[21px]"}`}>{icon}</div>{label}
    </div>
  );
}

function SaveDialog() {
  return (
    <div className="absolute left-[845px] top-[271px] flex h-[460px] w-[651px] flex-col overflow-hidden bg-[#1a1a1a] text-[12px] tracking-[-0.38px] text-[#ececec]">
      <div className="flex h-[30px] items-center bg-black pl-[7px] pr-[9px]"><QLogo /><span className="ml-1 tracking-[-0.55px]">Save Layer As</span><svg viewBox="0 0 10 10" className="ml-auto size-[11px]"><path d="M0 0l10 10M10 0L0 10" stroke="#fff" strokeWidth="1.100" /></svg></div>
      <div className="flex h-[41px] items-center bg-[#191919] pb-[2px] pl-[12px]">
        <svg viewBox="0 0 86 12" className="h-3 w-[86px]" fill="none" stroke="#9a9a9a" strokeWidth="1.500"><path d="M12 6H1M6 1L1 6l5 5M29 6h11M35 1l5 5-5 5" /><path d="M55 4.500L58 7l3-2.500" /><path d="M78.500 12V1M73.500 6l5-5 5 5" stroke="#fff" strokeWidth="1.800" /></svg>
        <div className="ml-[6px] flex h-[29px] w-[326px] items-center border border-[#555] pl-[4px]">
          <Folder /><span className="ml-[7px] w-[15px] text-[#bbb]">«</span><span className="w-[128px] whitespace-nowrap">CEM_shiny app (Alber...</span><Chev d="right" /><span className="ml-[6px]">gpkg</span><div className="ml-[7px]"><Chev d="right" /></div>
          <div className="ml-auto flex items-center"><Chev d="down" /><div className="ml-[10px] h-[27px] w-px bg-[#262626]" /><svg viewBox="0 0 12 12" className="ml-[11px] mr-[9px] size-[11px]" fill="none" stroke="#aaa" strokeWidth="1.400"><path d="M8.500 2.500A4.500 4.500 0 113 3M3 0v3.500h3.500" /></svg></div>
        </div>
        <div className="ml-3 flex h-[29px] w-[197px] items-center border border-[#555] pl-[14px] text-[#777]"><svg viewBox="0 0 12 12" className="mr-[13px] size-3" fill="none" stroke="#888"><circle cx="7.500" cy="4.500" r="3.800" /><path d="M5 7.500L.5 12" /></svg>Zoeken in gpkg</div>
      </div>
      <div className="flex h-[29px] items-center border-b border-[#2d2d2d] bg-[#1f1f1f] pl-[17px] pr-[15px]">
        <span className="w-[68px] tracking-[-0.5px]">Organiseren</span><svg viewBox="0 0 8 5" className="h-[5px] w-2"><path d="M0 0h8L4 5z" fill="#ccc" /></svg><span className="ml-[30px]">Nieuwe map</span>
        <svg viewBox="0 0 17 13" className="ml-auto h-[13px] w-[17px]"><path d="M0 0h4v13H0z" fill="#ccc" /><path d="M6 2.500h4M12 2.500h4M6 6.500h4M12 6.500h4M6 10.500h4M12 10.500h4" stroke="#888" /></svg>
        <svg viewBox="0 0 8 5" className="ml-[8px] h-[5px] w-2"><path d="M0 0h8L4 5z" fill="#ccc" /></svg>
        <div className="ml-[29px] flex size-[15px] items-center justify-center rounded-full bg-[#0a6fd0] text-[11px] font-bold text-white">?</div>
      </div>
      <div className="flex h-[245px] shrink-0">
        <div className="flex h-[245px] w-[136px] shrink-0 flex-col overflow-hidden bg-[#191919]">
          <Side h="mt-[16px] h-[24px]" label="Snelle toegang" icon={<svg viewBox="0 0 14 14" className="ml-[3px] size-[13px]"><path d="M8 0l1 5 5 0-4 3 1.500 5L7 10l-5 4 1.500-5.500L0 6l5-.5z" fill="#35a3ee" /></svg>} />
          <Side h="mt-[7px] h-6" label="Dropbox" icon={<svg viewBox="0 0 16 15" className="h-[14px] w-4" fill="#1266e8"><path d="M4 0l4 2.500L4 5 0 2.500zM12 0l4 2.500L12 5 8 2.500zM4 5.500L8 8l-4 2.500L0 8zM12 5.500L16 8l-4 2.500L8 8zM8 9.500l4 2.500-4 2.500L4 12z" /></svg>} />
          <Side h="h-[23.500px]" label=".dropbox.cache" inset icon={<Folder dim />} />
          <Side h="h-[23.500px]" label="EnergyShapefile" inset icon={<Folder />} />
          <Side h="mt-[7.500px] h-6" label="OneDrive - Office" icon={<Cloud />} />
          <Side h="mt-[7px] h-6" label="OneDrive - Person" icon={<Cloud />} />
          <Side h="h-[23px]" label="Documenten" inset on icon={<svg viewBox="0 0 12 15" className="h-[15px] w-3"><path d="M0 0h9l3 3v12H0z" fill="#f0f4f8" /><path d="M2 4h3M2 6.500h8M2 9h8M2 11.500h8" stroke="#2b78c0" strokeWidth="1.200" /></svg>} />
          <Side h="mt-[8px] h-6" label="Deze pc" icon={<svg viewBox="0 0 17 14" className="h-[14px] w-4"><rect x=".5" y=".5" width="16" height="9.500" fill="#52b4f5" stroke="#9bd0f5" /><path d="M3 13h11M8.500 10v3" stroke="#a9c4d8" strokeWidth="1.500" /></svg>} />
          <Side h="h-[23px]" label="3D-objecten" inset icon={<svg viewBox="0 0 16 14" className="-ml-1 h-[14px] w-4"><path d="M8 0l8 3-8 3-8-3z" fill="#9be8f0" /><path d="M0 3l8 3v8l-8-3z" fill="#3dbbd0" /><path d="M16 3L8 6v8l8-3z" fill="#1b93a8" /></svg>} />
        </div>
        <div className="flex w-[15px] shrink-0 flex-col items-center bg-[#171717]"><div className="flex h-[18px] items-center"><Chev d="up" color="#888" /></div><div className="h-[107px] w-full bg-[#4d4d4d]" /><div className="mb-[4px] mt-auto flex"><Chev d="down" color="#888" /></div></div>
        <div className="flex min-w-0 flex-1 flex-col border-l-4 border-[#222] bg-[#202020]">
          <div className="flex h-[26px] shrink-0 items-center pl-[18px] pt-px text-[#d8d8d8]">
            <span className="w-[117px]">Naam</span><div className="mb-[17px] w-[131px]"><Chev d="up" color="#bbb" /></div><div className="h-full w-px bg-[#5a5a5a]" />
            <span className="ml-[5px] w-[78px]">Status</span><span className="w-[69px] whitespace-nowrap text-right">Gewijzigd op</span><div className="ml-[65px] h-full w-px bg-[#5a5a5a]" /><span className="ml-[6px]">T</span>
          </div>
          <div className="mt-[6px]">
            {files.map(([n, d, t], i) => (
              <div key={n} className={`ml-[15px] flex h-[20.400px] items-center overflow-hidden whitespace-nowrap pl-[6px] ${i === 4 ? "bg-[#4d4d4d]" : ""}`}>
                {i < 5 ? <Folder /> : <svg viewBox="0 0 12 16" className="h-4 w-3 shrink-0"><path d="M0 0h8l4 4v12H0z" fill="#f8f8f8" /><path d="M8 0v4h4z" fill="#bbb" /></svg>}
                <span className={`ml-[5px] w-[236px] shrink-0 ${i === 5 ? "tracking-[-0.7px]" : ""}`}>{n}</span>
                <div className="w-[76px] shrink-0">{i === 5 && <svg viewBox="0 0 12 12" className="size-[11px]" fill="none" stroke="#1b7fd6" strokeWidth="1.500"><path d="M1 5a5 5 0 019-2M11 7a5 5 0 01-9 2M10.500 0v3.500H7M1.500 12V8.500H5" /></svg>}</div>
                <span className="w-[141px] shrink-0 tracking-[-0.6px] text-[#cfcfcf]">{d}</span><span className="text-[#cfcfcf]">{t}</span>
              </div>
            ))}
          </div>
          <div className="mt-auto flex h-4 items-center bg-[#171717] pl-[4px] pr-[4px]"><Chev d="left" /><div className="ml-[5px] h-full w-[331px] bg-[#4d4d4d]" /><div className="ml-auto flex"><Chev d="right" /></div></div>
        </div>
      </div>
      <div className="h-[115px] shrink-0 bg-[#383838]">
        <div className="flex items-center pt-[11px]"><span className="w-[117px] text-right tracking-[-0.6px]">Bestandsnaam:</span><div className="ml-[5px] flex h-[23px] w-[523px] items-center justify-between border border-[#e8e8e8] pl-[5px] pr-[4px]"><div className="h-[16px] w-px bg-white" /><Chev d="down" /></div></div>
        <div className="mt-[2px] flex items-center"><span className="w-[117px] text-right tracking-[-0.5px]">Opslaan als:</span><div className="ml-[5px] flex h-[22px] w-[523px] items-center justify-between border border-[#999] pl-[3px] pr-[4px]"><span className="tracking-[-0.7px]">GeoPackage (*.gpkg *.GPKG)</span><Chev d="down" /></div></div>
        <div className="mt-[19px] flex items-center pl-[12px]"><div className="mt-[5px]"><Chev d="up" color="#ddd" /></div><span className="ml-[8px] mt-[5px] w-[422px] tracking-[-0.62px]">Mappen verbergen</span>
          <div className="flex h-[26px] w-[86px] items-center justify-center border-2 border-white bg-[#333]">Opslaan</div><div className="ml-[11px] flex h-[26px] w-[87px] items-center justify-center border-[1.500px] border-[#e0e0e0] bg-[#333]">Annuleren</div></div>
        <svg viewBox="0 0 9 9" className="ml-[640px] mt-[2px] size-[9px]" fill="#bbb"><path d="M6 0h2v2H6zM3 3h2v2H3zM6 3h2v2H6zM0 6h2v2H0zM3 6h2v2H3zM6 6h2v2H6z" /></svg>
      </div>
    </div>
  );
}

function Spin({ text, w }: { text: string; w: string }) {
  return <div className={`${w} flex h-[21px] shrink-0 items-center justify-between rounded-[3px] border border-[#aaa] bg-white pl-1 pr-[2px]`}>{text}<svg viewBox="0 0 7 14" className="h-[13px] w-[7px]" fill="#555"><path d="M0 5h7L3.500 1zM0 9h7l-3.500 4z" /></svg></div>;
}

function StatusBar() {
  return (
    <div className="flex h-[25px] items-center pl-1 pt-[3px] text-[11px] tracking-[-0.35px]">
      <div className="flex h-[21px] w-[195px] shrink-0 items-center gap-[7px] rounded-[3px] border border-[#aaa] bg-white pl-2 text-[12px] tracking-[-0.4px] text-[#7a7a7a]"><Magnifier />Type to locate (Ctrl+K)</div>
      <span className="ml-[888px] w-[56px] shrink-0">Coordinate</span>
      <div className="flex h-[21px] w-[100px] shrink-0 items-center whitespace-nowrap rounded-[3px] border border-[#aaa] bg-white pl-[3px]">-123.3030,49.5989</div>
      <div className="ml-[4px] flex w-[28px] shrink-0"><Ic size="size-4"><path d="M3 2l7 7M9 1l3 8M2 9l8 3" stroke="#333" strokeWidth="2" /><rect x="7" y="8" width="11" height="14" rx="5" transform="rotate(-35 12 14)" fill="#ddd" stroke="#333" strokeWidth="2" /><path d="M14 8l6-6" stroke="#333" strokeWidth="2" /></Ic></div>
      <span className="w-[29px] shrink-0">Scale</span>
      <div className="flex h-[21px] w-[78px] shrink-0 items-center rounded-[3px] border border-[#aaa] bg-white pl-[3px]"><span className="w-[54px]">1:103405</span><div className="h-full w-px bg-[#bbb]" /><Caret w="w-[17px]" /></div>
      <svg viewBox="0 0 12 14" className="ml-[12px] mr-[8px] h-[14px] w-3 shrink-0"><path d="M3 7V4a3 3 0 016 0v3" fill="none" stroke="#666" strokeWidth="1.800" /><rect x="1" y="6" width="10" height="8" rx="1" fill="#555" /></svg>
      <span className="w-[47px] shrink-0">Magnifier</span><Spin text="100%" w="w-[84px]" />
      <span className="ml-[9px] w-[50px] shrink-0">Rotation</span><Spin text="0,0 °" w="w-[81px]" />
      <div className="ml-[7px]"><CheckBox checked /></div><span className="ml-1 w-[52px] shrink-0">Render</span>
      <Ic size="size-4"><circle cx="12" cy="12" r="10" fill="#888" /><path d="M2 12h20M12 2v20M4 7h16M4 17h16" stroke="#eee" /><ellipse cx="12" cy="12" rx="5" ry="10" stroke="#eee" /></Ic>
      <span className="ml-[2px] w-[71px] shrink-0 whitespace-nowrap">EPSG:4326</span>
      <svg viewBox="0 0 16 14" className="h-[14px] w-4 shrink-0"><path d="M8 0c5 0 8 2.500 8 6s-3 6-7 6l-5 2 1-3C2 10 0 8 0 6c0-3.500 3-6 8-6z" fill="#555" /><path d="M4 6h2M7 6h2M10 6h2" stroke="#fff" strokeWidth="1.800" /></svg>
    </div>
  );
}

function Callout({ n, pos, size = "size-[88px]" }: { n: string; pos: string; size?: string }) {
  return <div className={`absolute ${pos} ${size} flex items-center justify-center border-2 border-black bg-white pb-[1px] font-['Lato'] text-[39px] leading-none text-[#f30d0d]`}>{n}</div>;
}

const arrows = [[321, 47, 171, 18], [571, 280, 420.5, 252], [934, 232, 819, 283.5], [1327, 454, 1211.5, 505.5], [1457, 756, 1339, 710]];

function Arrows() {
  return (
    <svg viewBox="0 0 1880 1035" className="pointer-events-none absolute left-0 top-0 h-[1035px] w-[1880px]">
      {arrows.map(([x1, y1, x2, y2], i) => {
        const l = Math.hypot(x2 - x1, y2 - y1);
        const a = (Math.atan2(y2 - y1, x2 - x1) * 180) / Math.PI;
        return <g key={i} transform={`translate(${x1} ${y1}) rotate(${a})`} fill="#ed7d31"><rect y="-2.100" width={l - 18} height="4.200" /><path d={`M${l} 0l-24 -12v24z`} /></g>;
      })}
    </svg>
  );
}

export default function App() {
  return (
    <div className="relative h-[1035px] w-[1880px] overflow-hidden bg-white font-['Noto_Sans','Open_Sans',sans-serif] leading-none text-[#141414]">
      <div className="flex h-[1031px] w-[1873px] flex-col overflow-hidden border-b-2 border-[#444] bg-[#f0f0f0]">
        <MenuBar />
        <ToolbarOne />
        <ToolbarTwo />
        <div className="flex h-[37px] items-center border-b border-[#b9b9b9] bg-linear-to-b from-[#fbfbfb] to-[#f1f1f1]">
          <Grip w="w-[12px]" />
          <Cell><Ic><path d="M2 14L7 4l4-2h12v12l-5 5-9 3-6-2z" fill="#9a9a9a" stroke="#444" strokeWidth="1.300" strokeLinejoin="round" /><path d="M10 4l3-2h10v11l-2 2H9z" fill="#fff" stroke="#444" strokeWidth="1.300" strokeLinejoin="round" /><path d="M2 14l7 1 1 7M7 4l3 0M9 15l-5-6" stroke="#555" /></Ic></Cell>
        </div>
        <div className="mt-px flex h-[870px] shrink-0"><LayersPanel /><MapCanvas /><Toolbox /></div>
        <StatusBar />
      </div>
      <VectorDialog />
      <div className="absolute left-[845px] top-[271px] h-[460px] w-[651px] shadow-[0_4px_18px_rgba(0,0,0,0.5)] ring-1 ring-[#555]" />
      <SaveDialog />
      <Callout n="1" pos="left-[321px] top-[35px]" size="size-[88px] pr-[4px]" />
      <Callout n="2" pos="left-[571px] top-[251px]" size="size-[88px] pr-[4px]" />
      <Callout n="3" pos="left-[933px] top-[145px]" size="size-[89px] pr-[4px]" />
      <Callout n="4" pos="left-[1326px] top-[367px]" size="h-[88px] w-[88px] pr-[5px]" />
      <Callout n="5" pos="left-[1456px] top-[751px]" size="size-[92px] pr-[9px]" />
      <Arrows />
    </div>
  );
}
